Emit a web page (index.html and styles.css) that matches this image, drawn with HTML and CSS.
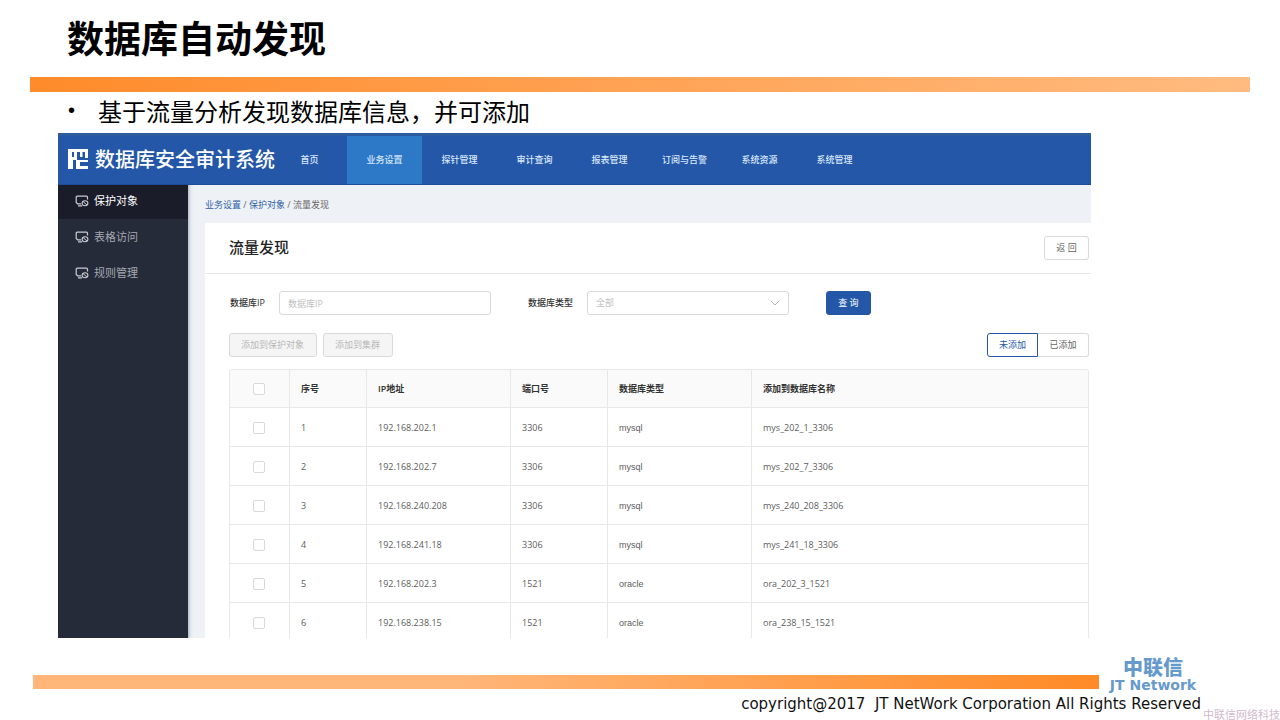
FILE: index.html
```html
<!DOCTYPE html>
<html lang="zh-CN">
<head>
<meta charset="utf-8">
<meta name="viewport" content="width=device-width, initial-scale=1">
<title>数据库自动发现</title>
<link rel="stylesheet" href="styles.css">
</head>
<body>
<svg class="sprite" aria-hidden="true">
  <symbol id="monitor" viewBox="0 0 14 12">
    <path d="M6 8.800H2.600L1.200 7.500V2.200Q1.200 1.200 2.200 1.200H11.500Q12.500 1.200 12.500 2.200V4.500M3 10.800H7" fill="none" stroke="currentColor" stroke-width="1.2"/>
    <ellipse cx="10" cy="8.200" rx="2.900" ry="2.500" fill="none" stroke="currentColor" stroke-width="1.1"/>
    <path d="M8 6.500L12 10" stroke="currentColor" stroke-width="1"/>
  </symbol>
</svg>
<div class="slide">
  <h1 class="slide-title">数据库自动发现</h1>
  <div class="bar bar-top"></div>
  <ul class="points"><li>基于流量分析发现数据库信息，并可添加</li></ul>

  <div class="app">
    <header class="app-header">
      <div class="brand">
        <svg class="brand-icon" viewBox="0 0 20 20" aria-hidden="true">
          <path d="M0 0H20V9H17V3H14.500V8H12V3H9V11H5V20H0ZM4 3V8H6V3Z" fill="#fff" fill-rule="evenodd"/>
          <path d="M8 11H20V13H12V17H20V20H8Z" fill="#fff"/>
        </svg>
        <span>数据库安全审计系统</span>
      </div>
      <nav class="nav">
        <a href="#">首页</a>
        <a href="#" class="active">业务设置</a>
        <a href="#">探针管理</a>
        <a href="#">审计查询</a>
        <a href="#">报表管理</a>
        <a href="#">订阅与告警</a>
        <a href="#">系统资源</a>
        <a href="#">系统管理</a>
      </nav>
    </header>
    <div class="app-body">
      <aside class="side">
        <a href="#" class="active"><svg><use href="#monitor"/></svg>保护对象</a>
        <a href="#"><svg><use href="#monitor"/></svg>表格访问</a>
        <a href="#"><svg><use href="#monitor"/></svg>规则管理</a>
      </aside>
      <main class="main">
        <div class="crumbs"><a href="#">业务设置</a> / <a href="#">保护对象</a> / <span>流量发现</span></div>
        <section class="panel">
          <div class="panel-head">
            <h2>流量发现</h2>
            <button type="button" class="btn">返 回</button>
          </div>
          <div class="panel-body">
            <form class="filters">
              <label for="ip">数据库IP</label>
              <input id="ip" class="field" type="text" placeholder="数据库IP">
              <label for="type" class="type-label">数据库类型</label>
              <div class="select-box">
                <select id="type" class="field"><option>全部</option></select>
                <svg viewBox="0 0 10 6" aria-hidden="true"><path d="M1 1L5 5L9 1" fill="none" stroke="#b5b5b5"/></svg>
              </div>
              <button type="button" class="btn primary">查 询</button>
            </form>
            <div class="actions">
              <button type="button" class="btn" disabled>添加到保护对象</button>
              <button type="button" class="btn" disabled>添加到集群</button>
              <div class="switch">
                <button type="button" class="btn on">未添加</button>
                <button type="button" class="btn">已添加</button>
              </div>
            </div>
            <div class="table-wrap">
            <table class="grid">
              <colgroup><col class="c-check"><col class="c-no"><col class="c-ip"><col class="c-port"><col class="c-type"><col></colgroup>
              <thead>
                <tr><th><input type="checkbox" aria-label="全选"></th><th>序号</th><th>IP地址</th><th>端口号</th><th>数据库类型</th><th>添加到数据库名称</th></tr>
              </thead>
              <tbody>
                <tr><td><input type="checkbox" aria-label="选择 1"></td><td>1</td><td>192.168.202.1</td><td>3306</td><td class="word">mysql</td><td>mys_202_1_3306</td></tr>
                <tr><td><input type="checkbox" aria-label="选择 2"></td><td>2</td><td>192.168.202.7</td><td>3306</td><td class="word">mysql</td><td>mys_202_7_3306</td></tr>
                <tr><td><input type="checkbox" aria-label="选择 3"></td><td>3</td><td>192.168.240.208</td><td>3306</td><td class="word">mysql</td><td>mys_240_208_3306</td></tr>
                <tr><td><input type="checkbox" aria-label="选择 4"></td><td>4</td><td>192.168.241.18</td><td>3306</td><td class="word">mysql</td><td>mys_241_18_3306</td></tr>
                <tr><td><input type="checkbox" aria-label="选择 5"></td><td>5</td><td>192.168.202.3</td><td>1521</td><td class="word">oracle</td><td>ora_202_3_1521</td></tr>
                <tr><td><input type="checkbox" aria-label="选择 6"></td><td>6</td><td>192.168.238.15</td><td>1521</td><td class="word">oracle</td><td>ora_238_15_1521</td></tr>
              </tbody>
            </table>
            </div>
          </div>
        </section>
      </main>
    </div>
  </div>

  <footer class="foot">
    <div class="foot-row">
      <div class="bar bar-bottom"></div>
      <div class="company"><span class="company-cn">中联信</span><span class="company-en">JT Network</span></div>
    </div>
    <p class="copyright">copyright@2017&nbsp; JT NetWork Corporation All Rights Reserved</p>
  </footer>
  <div class="watermark">中联信网络科技</div>
</div>
</body>
</html>
```
FILE: styles.css
```css
* { box-sizing: border-box; }
body {
  margin: 0;
  background: #fff;
  color: #000;
  font-family: "Open Sans", "Noto Sans CJK SC", sans-serif;
}
a { color: inherit; text-decoration: none; }
button, input, select { font: inherit; }
.sprite { display: none; }
.slide { position: relative; min-height: 100vh; }

.slide-title {
  margin: 0;
  padding: 9px 67px 12px;
  font: bold 37px/56px "Noto Sans CJK SC", sans-serif;
}
.bar { height: 14px; }
.bar-top {
  height: 15px;
  margin: 0 30px;
  background: linear-gradient(90deg, #ff8b2a, #ffbb80);
}
.points {
  margin: 0;
  padding: 0 0 0 68px;
  list-style: none;
  font: 24px/37px "Noto Sans CJK SC", sans-serif;
}
.points li { display: flex; margin-bottom: 4px; }
.points li::before { content: "•"; width: 30px; font-size: 20px; font-family: "Liberation Sans", sans-serif; }

.app {
  margin: 0 189px 0 58px;
  font-size: 9px;
  line-height: 14px;
}
.app-header {
  display: flex;
  height: 52px;
  border-top: 3px solid #2c5c9f;
  border-bottom: 1px solid #1f4c98;
  background: #2457a8;
  color: #fff;
}
.brand {
  display: flex;
  flex: none;
  align-items: center;
  gap: 7px;
  width: 214px;
  padding: 0 0 3px 10px;
  font: 500 20px/30px "Noto Sans CJK SC", sans-serif;
  white-space: nowrap;
}
.brand-icon { flex: none; width: 20px; height: 20px; }
.nav { display: flex; color: #d9e7fa; font-weight: 500; }
.nav a {
  display: flex;
  align-items: center;
  justify-content: center;
  width: 75px;
}
.nav .active { background: #2e79c7; }

.app-body { display: flex; }
.side {
  display: flex;
  flex: none;
  flex-direction: column;
  gap: 2px;
  width: 130px;
  background: #262b3a;
  color: #a5a9b2;
  font-size: 11px;
}
.side a {
  display: flex;
  align-items: center;
  gap: 5px;
  height: 34px;
  padding: 0 0 2px 17px;
}
.side svg { width: 14px; height: 12px; color: #c9ccd2; }
.side .active { background: #1b1c29; color: #fff; }

.main {
  flex: 1;
  min-width: 0;
  padding-left: 17px;
  background: linear-gradient(90deg, #b9bfca, #e6eaf0 3px, #eef2f6 6px);
}
.crumbs { padding: 13px 0 11px; color: #666; }
.crumbs a { color: #2f5fa8; }
.panel { background: #fff; }
.panel-head {
  display: flex;
  align-items: center;
  justify-content: space-between;
  height: 51px;
  padding: 0 2px 0 24px;
  border-bottom: 1px solid #e8e8e8;
}
.panel-head h2 {
  margin: 0;
  padding-bottom: 3px;
  color: #222;
  font: 500 15px/22px "Noto Sans CJK SC", sans-serif;
}
.panel-body { padding: 17px 2px 0 24px; }

.btn {
  height: 24px;
  padding: 0 11px;
  border: 1px solid #d9d9d9;
  border-radius: 3px;
  background: #fff;
  color: #666;
  white-space: nowrap;
}
.btn:disabled { padding: 0 12px 0 11px; background: #f5f5f5; color: #b8b8b8; }
.btn.primary { margin-left: 37px; border-color: #2457a8; background: #2457a8; color: #fff; }
.filters .btn, .panel-head .btn { width: 45px; }
.filters { display: flex; align-items: center; padding-left: 1px; color: #333; }
.filters label { white-space: nowrap; font-weight: 500; }
.field {
  width: 212px;
  height: 24px;
  padding: 0 8px;
  border: 1px solid #d9d9d9;
  border-radius: 3px;
  background: #fff;
  color: #bfbfbf;
}
.field::placeholder { color: #bfbfbf; }
#ip { margin-left: 14px; }
.type-label { width: 46px; margin-left: 37px; }
.select-box { position: relative; width: 202px; margin-left: 13px; }
.select-box .field { display: block; width: 100%; appearance: none; }
.select-box svg { position: absolute; top: 9px; right: 9px; width: 10px; height: 6px; pointer-events: none; }

.actions { display: flex; gap: 6px; margin: 18px 0 12px; }
.switch { display: flex; margin-left: auto; }
.switch .btn { width: 51px; border-left: 0; border-radius: 0 3px 3px 0; }
.switch .on { border: 1px solid #2457a8; border-radius: 3px 0 0 3px; color: #2457a8; }

.table-wrap { border: 1px solid #e8e8e8; border-bottom: 0; border-radius: 3px 3px 0 0; overflow: hidden; }
.grid {
  width: 100%;
  border-collapse: separate;
  border-spacing: 0;
  table-layout: fixed;
  color: #5c5c5c;
}
.grid th, .grid td {
  padding: 13px 11px 11px;
  border-right: 1px solid #e8e8e8;
  border-bottom: 1px solid #e8e8e8;
  text-align: left;
}
.grid th { padding-top: 12px; background: #fafafa; color: #333; font-weight: 600; }
.grid th:last-child, .grid td:last-child { border-right: 0; }
.grid th:first-child, .grid td:first-child { padding-left: 0; padding-right: 1px; }
.grid tbody tr:last-child td { padding-bottom: 8px; border-bottom: 0; }
.grid .word { font-family: "Liberation Sans", sans-serif; }
.grid input {
  display: block;
  width: 12px;
  height: 12px;
  margin: 1px auto;
  appearance: none;
  border: 1px solid #d9d9d9;
  border-radius: 2px;
  background: #fff;
}
.c-check { width: 60px; }
.c-no { width: 77px; }
.c-ip { width: 144px; }
.c-port { width: 97px; }
.c-type { width: 144px; }

.foot { padding: 19px 79px 0 33px; }
.foot-row { display: flex; align-items: flex-end; gap: 6px; }
.bar-bottom { flex: 1; margin-bottom: 4px; background: linear-gradient(90deg, #ffb678 40%, #ff8a26); }
.company {
  display: flex;
  flex-direction: column;
  align-items: center;
  width: 96px;
  color: #6699cc;
  white-space: nowrap;
}
.company-cn { font: 900 20px/20px "Noto Sans CJK SC", sans-serif; }
.company-en { font: bold 14px/16px "DejaVu Sans", sans-serif; }
.copyright {
  margin: 1px 0 0;
  text-align: right;
  color: #111;
  font: 15px/20px "DejaVu Sans", sans-serif;
}
.watermark {
  position: absolute;
  right: 0;
  bottom: 0;
  color: #d3b9cb;
  font: 11px/12px "Noto Sans CJK SC", sans-serif;
}
```
